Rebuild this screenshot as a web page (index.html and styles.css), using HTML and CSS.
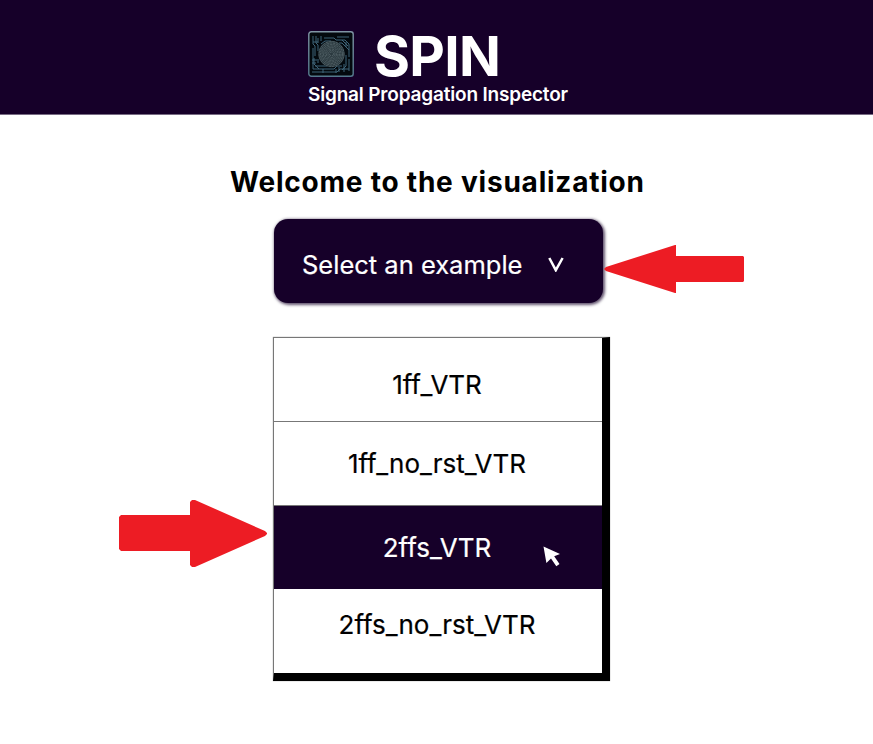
FILE: index.html
```
<!DOCTYPE html>
<html lang="en">
<head>
<meta charset="utf-8">
<title>SPIN</title>
<link rel="stylesheet" href="styles.css">
</head>
<body>
<header class="header">
  <div class="brand">
    <svg class="logo" viewBox="0 0 46 46" aria-hidden="true">
      <defs><linearGradient id="edge" x1="0" y1="0" x2="0" y2="1"><stop stop-color="#7f95a5"/><stop offset="1" stop-color="#54798d"/></linearGradient></defs>
      <rect x=".8" y=".8" width="44.4" height="44.4" rx="2.5" fill="#03090e" stroke="url(#edge)" stroke-width="1.4"/>
      <g fill="none" stroke="#3f6478" stroke-width="1">
        <path d="M5 5v8l2 2v10M8 5v7l2 2v6M5 17v21M4 41h25l3-3h9M5 38h21l3-3h5M7 35h12M11 38l-5-5v-6M10 32v-4"/>
        <path d="M13 5v5M16 7h10l2 2h9l4 4v13M17 10h6M29 6h12M31 12h3l7 7M38 16v-5M34 9l6 6M41 28v12M38 24v11l-4 4M36 33v8M31 41v-5M28 42v-4M15 42v-4M5 11h5M10 7v5M13 13l4-3M4 29h5M4 32h4"/>
      </g>
      <circle cx="23.5" cy="23" r="13.2" fill="#2b393f"/>
      <g fill="none" stroke="#65757a" stroke-width=".6" stroke-dasharray="2.6 .7">
        <circle cx="23.5" cy="23" r="12.5"/><circle cx="23.5" cy="23" r="11"/><circle cx="23.5" cy="23" r="9.5"/><circle cx="23.5" cy="23" r="8"/><circle cx="23.5" cy="23" r="6.5"/><circle cx="23.5" cy="23" r="5"/><circle cx="23.5" cy="23" r="3.5"/><circle cx="23.5" cy="23" r="2"/>
      </g>
    </svg>
    <h1 class="name">SPIN</h1>
  </div>
  <p class="tagline">Signal Propagation Inspector</p>
</header>
<main class="main">
  <h2 class="welcome">Welcome to the visualization</h2>
  <button class="select"><span class="select-label">Select an example</span><svg class="chevron" viewBox="0 0 16 15"><path d="M1.3 1 7.8 13.2 14.6 1" /></svg></button>
  <ul class="menu">
    <li class="item first">1ff_VTR</li>
    <li class="item">1ff_no_rst_VTR</li>
    <li class="item active">2ffs_VTR</li>
    <li class="item last">2ffs_no_rst_VTR</li>
  </ul>
</main>
<svg class="arrow arrow-left" viewBox="0 0 140 48"><path d="M0 24 2 22 71 0H72V11H139L140 12V36L139 37H72V48H71L2 26Z"/></svg>
<svg class="arrow arrow-right" viewBox="0 0 148 68"><path d="M0 17 2 15H71V2L73 0H76L146 31 148 33V34L146 36 76 67H73L71 65V51H2L0 49Z"/></svg>
<svg class="cursor" viewBox="0 0 18 21"><path d="M.5.5 17 8 11.2 10.3 16.5 18 13.3 20.3 8 12.5 3.4 17Z"/></svg>
</body>
</html>
```
FILE: styles.css
```
* { box-sizing: border-box; }
body { margin: 0; width: 873px; height: 744px; position: relative; overflow: hidden; background: #fff; color: #000; font-family: Inter, "Liberation Sans", sans-serif; }
h1, h2, p, ul { margin: 0; padding: 0; }
.header { height: 115px; padding: 31px 0 0 308px; background: #160029; border-bottom: 1px solid #776b83; color: #fff; }
.brand { display: flex; height: 52px; gap: 20px; }
.logo { width: 46px; height: 46px; flex: none; }
.name { height: 50px; font-size: 55px; line-height: 50px; font-weight: 700; letter-spacing: -.7px; white-space: nowrap; }
.tagline { font-size: 19px; line-height: 23px; font-weight: 600; letter-spacing: -.18px; white-space: nowrap; }
.main { display: flex; flex-direction: column; align-items: flex-start; }
.welcome { margin: 49px 0 0 230px; font-size: 28px; line-height: 36px; height: 36px; font-weight: 650; letter-spacing: .78px; white-space: nowrap; }
.select { margin: 19px 0 0 274px; width: 329px; height: 84px; padding: 7px 0 0 28px; display: flex; align-items: center; border: 0; border-radius: 14px; background: #160029; box-shadow: 1px 1px 3px 1px #160029aa; color: #fff; font-family: inherit; font-size: 25.5px; -webkit-text-stroke: .2px; white-space: nowrap; }
.select-label { width: 246px; text-align: left; }
.chevron { width: 16px; height: 15px; }
.chevron path { fill: none; stroke: #fff; stroke-width: 2.5; }
.menu { margin: 34px 0 0 273px; width: 337px; height: 344px; border: 1px solid #777; border-width: 1px 8px 8px 1px; border-right-color: #000; border-bottom-color: #000; list-style: none; box-shadow: 0 0 1px #888; }
.item { height: 84px; padding: 0 2px 1px 0; display: flex; align-items: center; justify-content: center; border-bottom: 1px solid #777; font-size: 26px; -webkit-text-stroke: .2px; white-space: nowrap; }
.first { padding: 9px 2px 0 0; }
.active { height: 83px; padding: 0 2px 0 0; background: #160029; color: #fff; border-bottom-color: #160029; }
.last { padding: 0 2px 13px 0; border-bottom: 0; }
.arrow { position: absolute; fill: #ed1c24; }
.arrow-left { left: 604px; top: 245px; width: 140px; height: 48px; }
.arrow-right { left: 119px; top: 500px; width: 148px; height: 68px; }
.cursor { position: absolute; left: 543px; top: 546px; width: 18px; height: 21px; fill: #fff; }
```
